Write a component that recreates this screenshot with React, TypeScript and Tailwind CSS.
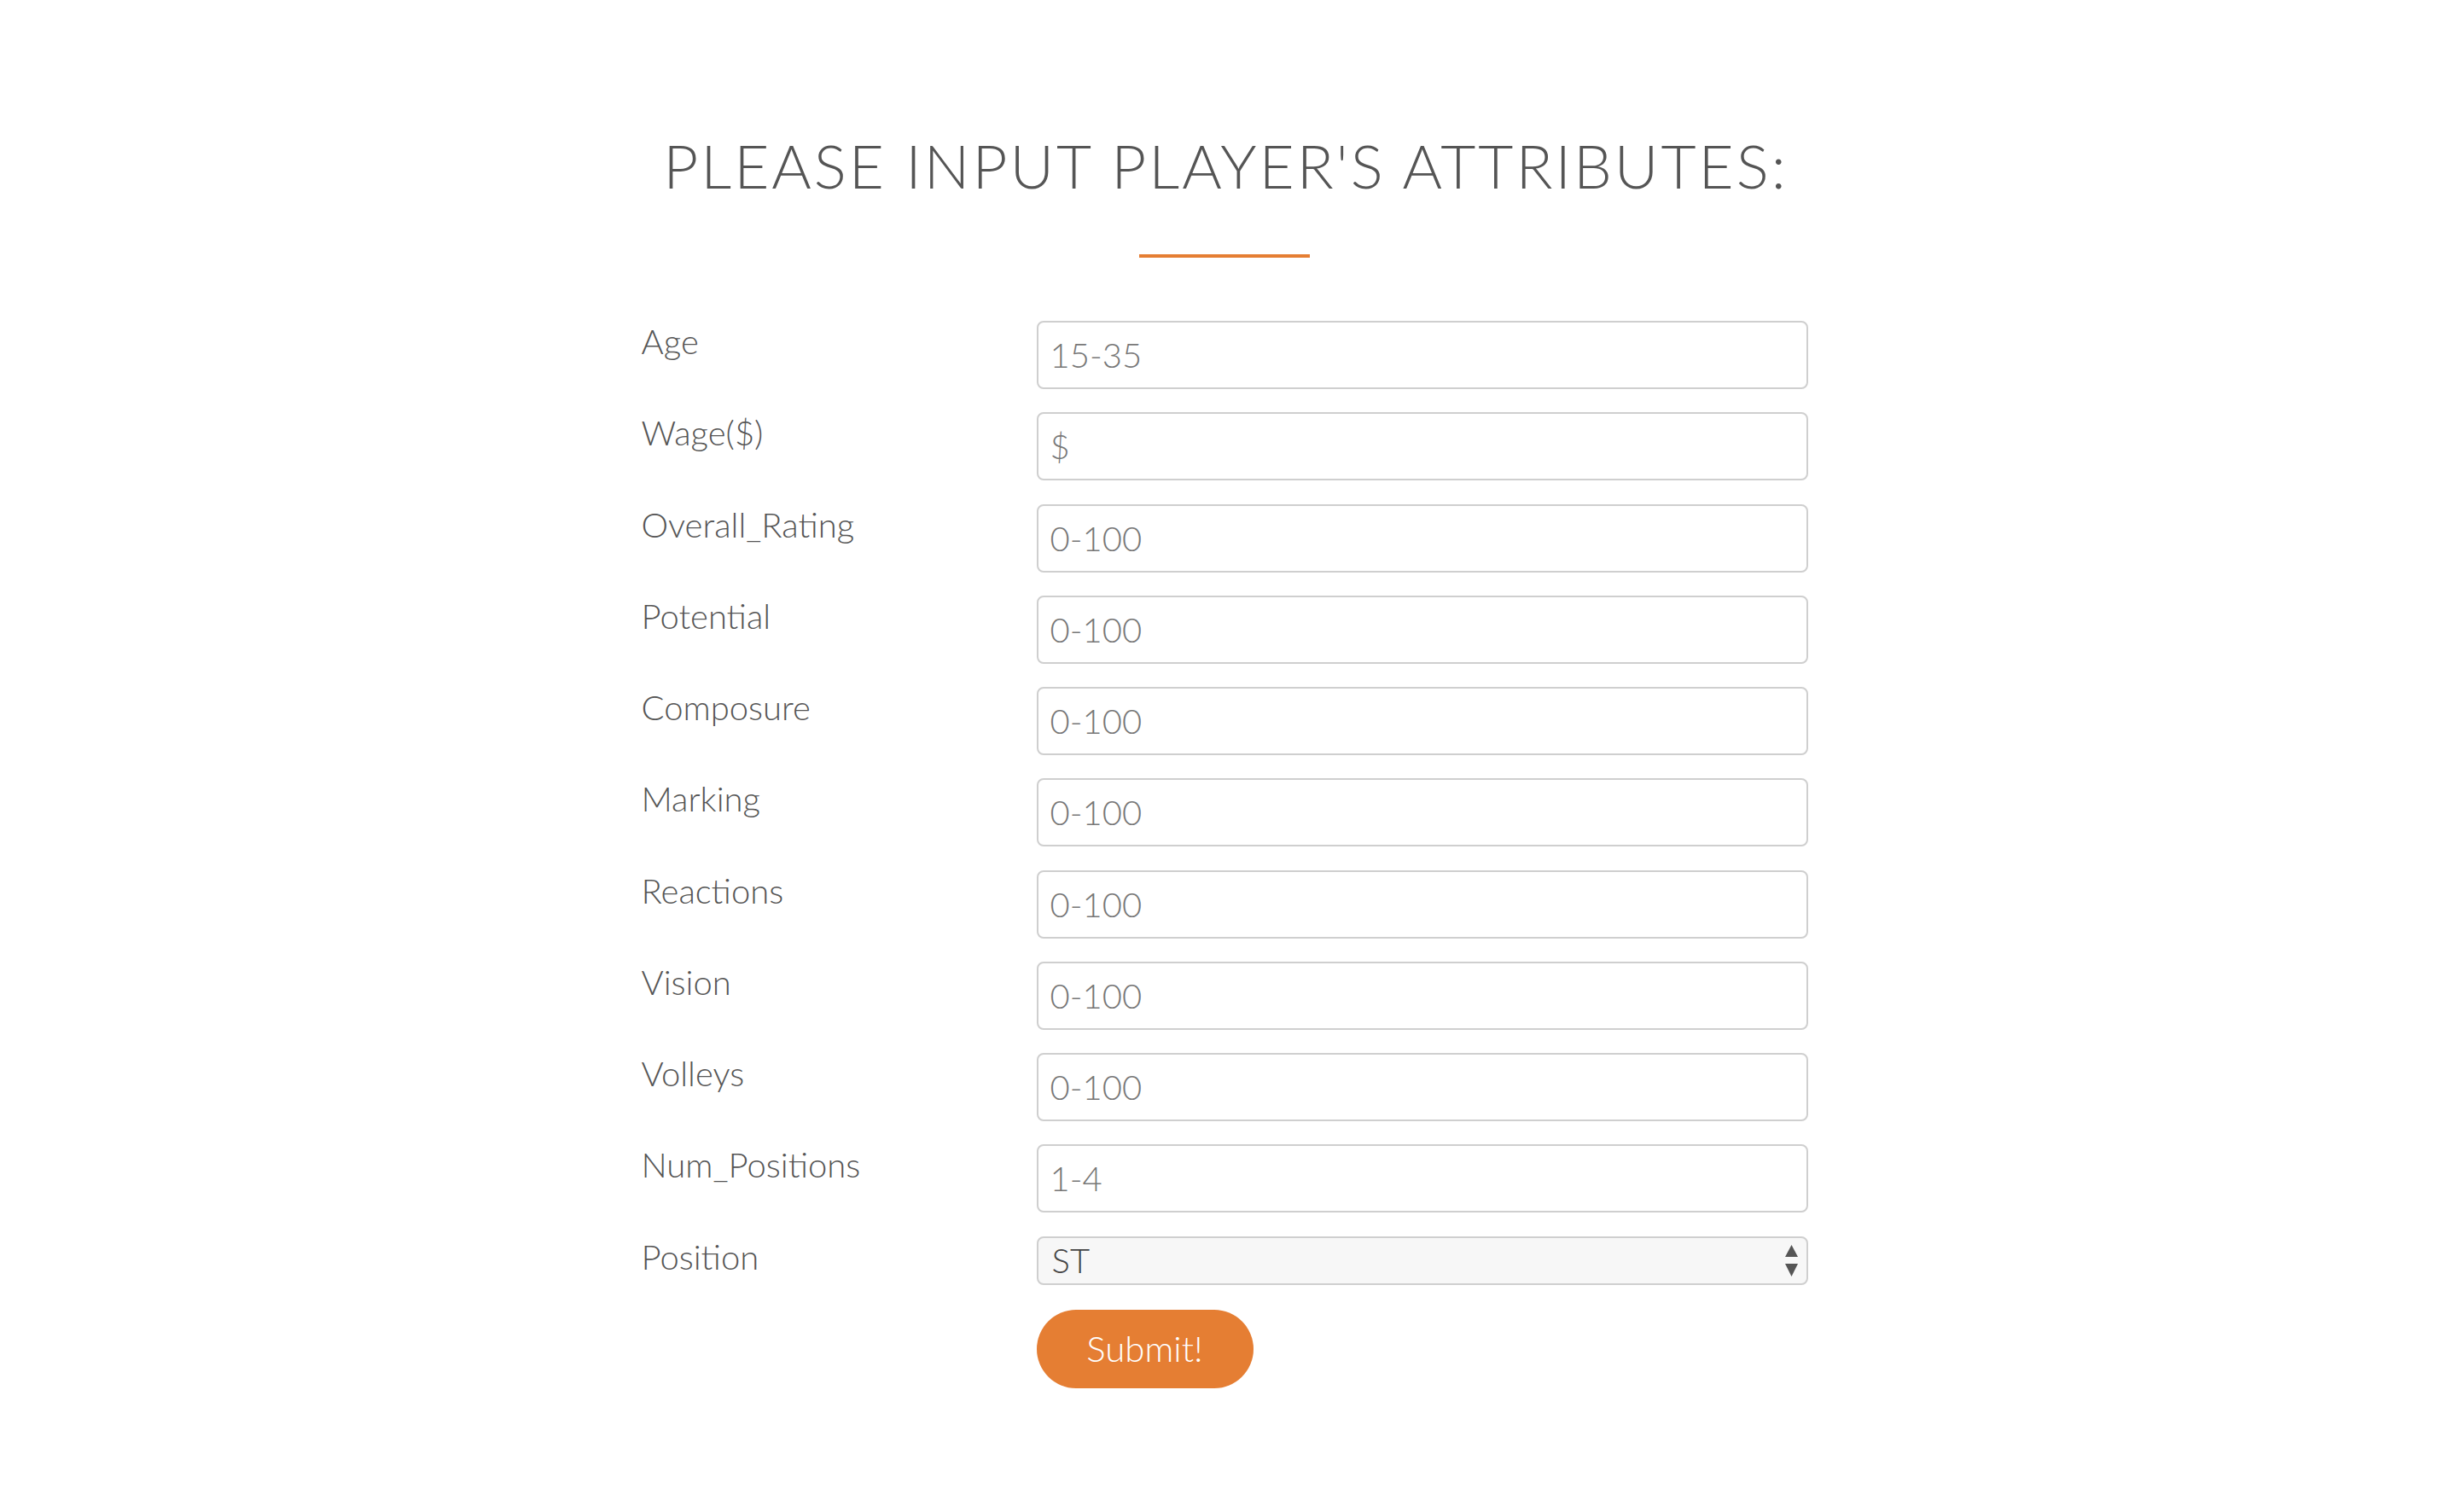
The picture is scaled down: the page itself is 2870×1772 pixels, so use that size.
import { useState } from 'react';

const fields = [
  { label: 'Age', placeholder: '15-35' },
  { label: 'Wage($)', placeholder: '$' },
  { label: 'Overall_Rating', placeholder: '0-100' },
  { label: 'Potential', placeholder: '0-100' },
  { label: 'Composure', placeholder: '0-100' },
  { label: 'Marking', placeholder: '0-100' },
  { label: 'Reactions', placeholder: '0-100' },
  { label: 'Vision', placeholder: '0-100' },
  { label: 'Volleys', placeholder: '0-100' },
  { label: 'Num_Positions', placeholder: '1-4' },
];

const positions = ['ST', 'CF', 'LW', 'RW', 'CAM', 'CM', 'CDM', 'LM', 'RM', 'LB', 'RB', 'CB', 'GK'];

export default function App() {
  const [position, setPosition] = useState('ST');

  return (
    <div className="min-h-screen bg-white font-['Lato','Liberation_Sans',sans-serif] text-[#555]">
      <div className="flex flex-col items-center pt-[151px]">
        {/* Heading */}
        <h1 className="pl-[3px] text-[71px] leading-[1.2] font-light tracking-[3px] text-[#555] uppercase">
          Please input player's attributes:
        </h1>
        <div className="mt-[62px] h-[4px] w-[200px] bg-[#e57e33]" />

        {/* Form */}
        <form
          className="mt-[74px] grid w-[1367px] grid-cols-[463px_904px] gap-y-[27.25px]"
          onSubmit={(e) => e.preventDefault()}
        >
          {fields.map((f) => (
            <div key={f.label} className="contents">
              <label className="text-[40px] leading-[1.2] font-light text-[#555]">{f.label}</label>
              <input
                type="text"
                placeholder={f.placeholder}
                className="h-[80px] w-full rounded-[8px] border-2 border-[#cfcfcf] bg-white px-[14px] text-[40px] font-light text-[#444] outline-none placeholder:text-[#777]"
              />
            </div>
          ))}

          <label className="text-[40px] leading-[1.2] font-light text-[#555]">Position</label>
          <div className="relative">
            <select
              value={position}
              onChange={(e) => setPosition(e.target.value)}
              className="h-[57px] w-full appearance-none rounded-[8px] border-2 border-[#cfcfcf] bg-[#f7f7f7] px-[16px] text-[40px] leading-none font-light text-[#444] outline-none"
            >
              {positions.map((p) => (
                <option key={p} value={p}>
                  {p}
                </option>
              ))}
            </select>
            <svg
              className="pointer-events-none absolute right-[12px] top-[10px]"
              width="15"
              height="37"
              viewBox="0 0 15 37"
            >
              <path d="M7.5 0 L15 14 L0 14 Z" fill="#555" />
              <path d="M0 22 L15 22 L7.5 37 Z" fill="#555" />
            </svg>
          </div>

          <div />
          <div className="pt-[2px]">
            <button
              type="submit"
              className="h-[92px] w-[254px] rounded-full bg-[#e57e33] text-[42px] font-light text-white"
            >
              Submit!
            </button>
          </div>
        </form>
      </div>
    </div>
  );
}
